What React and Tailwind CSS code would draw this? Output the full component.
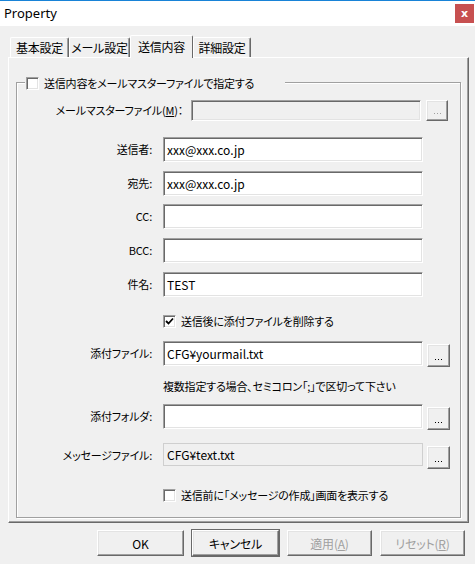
import React from "react";

const sunken =
  "border border-t-[#a0a0a0] border-l-[#a0a0a0] border-b-white border-r-white shadow-[inset_1px_1px_0_#696969,inset_-1px_-1px_0_#e3e3e3]";
const raised =
  "border border-t-white border-l-white border-b-[#696969] border-r-[#696969] shadow-[inset_-1px_-1px_0_#a0a0a0,inset_1px_1px_0_#e3e3e3]";

function CheckBox({ checked }) {
  return (
    <div className={`w-[13px] h-[13px] bg-white shrink-0 flex items-center justify-center ${sunken}`}>
      {checked && (
        <svg width="9" height="9" viewBox="0 0 9 9">
          <path d="M1 4 L3.5 6.5 L8 1.5" stroke="#000" strokeWidth="1.8" fill="none" />
        </svg>
      )}
    </div>
  );
}

function Dots({ disabled, w, h }) {
  const dot = disabled ? "w-[1px] h-[1px] bg-[#a0a0a0]" : "w-[1px] h-[1px] bg-black";
  return (
    <div
      className={`flex items-end justify-center gap-[2px] pb-[6px] bg-[#f0f0f0] ${raised}`}
      style={{ width: w, height: h }}
    >
      <div className={dot} />
      <div className={dot} />
      <div className={dot} />
    </div>
  );
}

function Row({ label, value, mt, button, readOnly }) {
  return (
    <div className="flex items-start" style={{ marginTop: mt }}>
      <div className="w-[136px] h-[25px] flex items-center justify-end pr-[1px]">{label}</div>
      <div
        className={`ml-[10px] w-[260px] flex items-center pl-[3px] text-[12px] tracking-normal ${
          readOnly
            ? "bg-[#f0f0f0] border border-[#cfcfcf] h-[23px]"
            : `bg-white h-[25px] ${sunken}`
        }`}
      >
        {value}
      </div>
      {button && (
        <div className="ml-[4px] mt-[3px]">
          <Dots w={23} h={23} />
        </div>
      )}
    </div>
  );
}

function Tab({ label, w, active }) {
  return (
    <div
      className={`flex items-center justify-center border-t border-l border-white border-r border-r-[#696969] rounded-t-[2px] ${
        active
          ? "h-[23px] bg-[#f0f0f0] relative z-10 -mb-[1px] pb-[2px]"
          : "h-[20px] bg-[#f0f0f0] shadow-[inset_-1px_0_0_#a0a0a0]"
      }`}
      style={{ width: w }}
    >
      {label}
    </div>
  );
}

function Btn({ label, w, isDefault, disabled }) {
  return (
    <div
      className={`h-[26px] flex items-center justify-center bg-[#f0f0f0] ${raised} ${
        isDefault ? "outline outline-1 outline-[#696969]" : ""
      } ${disabled ? "text-[#a0a0a0]" : "text-black"}`}
      style={{ width: w }}
    >
      {label}
    </div>
  );
}

export default function App() {
  return (
    <div className="w-[475px] h-[564px] bg-[#f0f0f0] flex flex-col overflow-hidden text-[11px] leading-[15px] tracking-[-0.2px] text-black font-['Noto_Sans_CJK_JP','Noto_Sans',sans-serif] [font-feature-settings:'palt']">
      {/* title bar */}
      <div className="h-[1px] bg-[#1883d7]" />
      <div className="h-[25px] bg-white flex items-center justify-between">
        <span className="ml-[4px] text-[13px] tracking-normal font-['Noto_Sans',sans-serif]">Property</span>
        <div className="mr-[1px] w-[19px] h-[19px] bg-[#c75050] flex items-center justify-center text-white text-[11px] font-bold font-['DejaVu_Sans',sans-serif]">
          x
        </div>
      </div>

      {/* tabs */}
      <div className="flex items-end pl-[10px] mt-[9px] text-[12px]">
        <Tab label="基本設定" w={59} />
        <Tab label="メール設定" w={61} />
        <Tab label="送信内容" w={63} active />
        <Tab label="詳細設定" w={58} />
      </div>

      {/* panel */}
      <div className="ml-[8px] w-[461px] h-[466px] border border-t-white border-l-white border-b-[#696969] border-r-[#696969] shadow-[inset_-1px_-1px_0_#a0a0a0]">
        <div className="relative ml-[7px] mt-[24px] w-[445px] h-[436px] border border-[#a0a0a0] shadow-[1px_1px_0_#ffffff,inset_1px_1px_0_#ffffff]">
          <div className="absolute -top-[7px] left-[8px] w-[260px] flex items-center gap-[5px] bg-[#f0f0f0] pl-[1px]">
            <CheckBox />
            <span>送信内容をメールマスターファイルで指定する</span>
          </div>

          <div className="flex flex-col">
            {/* master file */}
            <div className="flex items-center mt-[17px]">
              <div className="w-[166px] text-right">メールマスターファイル(<span className="underline">M</span>)：</div>
              <div className={`ml-[8px] w-[230px] h-[21px] bg-[#f0f0f0] ${sunken}`} />
              <div className="ml-[5px]">
                <Dots disabled w={22} h={21} />
              </div>
            </div>

            <Row label="送信者:" value="xxx@xxx.co.jp" mt={16} />
            <Row label="宛先:" value="xxx@xxx.co.jp" mt={9} />
            <Row label="CC:" mt={8} />
            <Row label="BCC:" mt={9} />
            <Row label="件名:" value="TEST" mt={9} />

            <div className="flex items-center ml-[146px] mt-[18px] h-[13px] gap-[5px]">
              <CheckBox checked />
              <span>送信後に添付ファイルを削除する</span>
            </div>

            <Row label="添付ファイル:" value="CFG¥yourmail.txt" mt={13} button />

            <div className="ml-[146px] mt-[12px] h-[15px]">複数指定する場合、セミコロン「;」で区切って下さい</div>

            <Row label="添付フォルダ:" mt={10} button />
            <Row label="メッセージファイル:" value="CFG¥text.txt" mt={13} button readOnly />

            <div className="flex items-center ml-[146px] mt-[20px] h-[13px] gap-[5px]">
              <CheckBox />
              <span>送信前に「メッセージの作成」画面を表示する</span>
            </div>
          </div>
        </div>
      </div>

      {/* buttons */}
      <div className="flex ml-[97px] mt-[7px] gap-[8px] text-[12px]">
        <Btn label="OK" w={87} />
        <Btn label="キャンセル" w={87} isDefault />
        <Btn label={<span>適用(<span className="underline">A</span>)</span>} w={85} disabled />
        <Btn label={<span>リセット(<span className="underline">R</span>)</span>} w={85} disabled />
      </div>
    </div>
  );
}
